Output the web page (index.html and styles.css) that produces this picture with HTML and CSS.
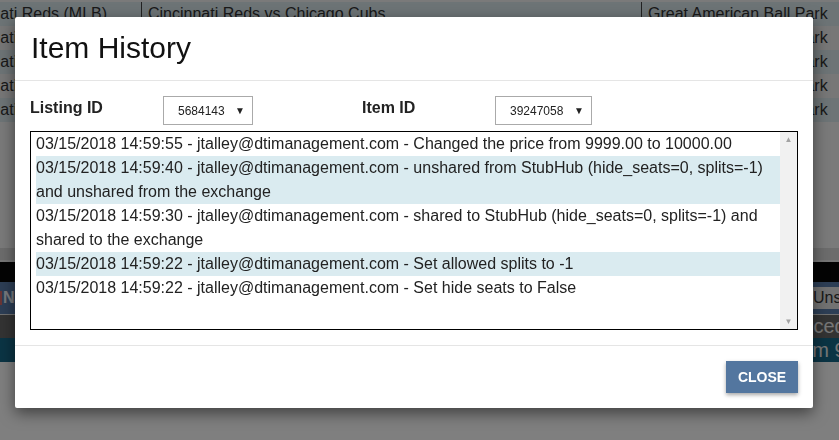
FILE: index.html
```html
<!DOCTYPE html>
<html lang="en">
  <head>
    <meta charset="UTF-8" />
    <meta name="viewport" content="width=device-width, initial-scale=1.0" />
    <title>Item History</title>
    <link rel="stylesheet" href="styles.css">
  </head>
  <body>
    <div class="page">
      <div class="grid">
        <div class="grid-row alt">
          <div class="cell c1">Cincinnati Reds (MLB)</div>
          <div class="cell c2">Cincinnati Reds vs Chicago Cubs</div>
          <div class="cell c3">Great American Ball Park</div>
        </div>
        <div class="grid-row">
          <div class="cell c1">Cincinnati Reds (MLB)</div>
          <div class="cell c2">Cincinnati Reds vs Chicago Cubs</div>
          <div class="cell c3">Great American Ball Park</div>
        </div>
        <div class="grid-row alt">
          <div class="cell c1">Cincinnati Reds (MLB)</div>
          <div class="cell c2">Cincinnati Reds vs Chicago Cubs</div>
          <div class="cell c3">Great American Ball Park</div>
        </div>
        <div class="grid-row">
          <div class="cell c1">Cincinnati Reds (MLB)</div>
          <div class="cell c2">Cincinnati Reds vs Chicago Cubs</div>
          <div class="cell c3">Great American Ball Park</div>
        </div>
        <div class="grid-row alt">
          <div class="cell c1">Cincinnati Reds (MLB)</div>
          <div class="cell c2">Cincinnati Reds vs Chicago Cubs</div>
          <div class="cell c3">Great American Ball Park</div>
        </div>
      </div>
      <div class="filler"></div>
      <div class="toolbar"></div>
      <div class="blackbar"></div>
      <div class="headbar">
        <span class="headcell"><span class="flag"></span>Name</span>
        <span class="pill">Unshare</span>
      </div>
      <div class="darkbar"><span class="tail">Priced</span></div>
      <div class="tealbar"><span class="tail">from 9999.00</span></div>
    </div>

    <div class="overlay"></div>

    <div class="modal">
      <div class="modal-header">
        <h2 class="modal-title">Item History</h2>
      </div>
      <div class="modal-body">
        <div class="id-row">
          <label class="id-label">Listing ID</label>
          <div class="dropdown first"><span>5684143</span><span class="caret">&#9660;</span></div>
          <label class="id-label">Item ID</label>
          <div class="dropdown second"><span>39247058</span><span class="caret">&#9660;</span></div>
        </div>
        <div class="history">
          <ul class="history-list">
            <li>03/15/2018 14:59:55 - jtalley@dtimanagement.com - Changed the price from 9999.00 to 10000.00</li>
            <li class="hl">03/15/2018 14:59:40 - jtalley@dtimanagement.com - unshared from StubHub (hide_seats=0, splits=-1) and unshared from the exchange</li>
            <li>03/15/2018 14:59:30 - jtalley@dtimanagement.com - shared to StubHub (hide_seats=0, splits=-1) and shared to the exchange</li>
            <li class="hl">03/15/2018 14:59:22 - jtalley@dtimanagement.com - Set allowed splits to -1</li>
            <li>03/15/2018 14:59:22 - jtalley@dtimanagement.com - Set hide seats to False</li>
          </ul>
          <div class="scrollbar">
            <span class="arrow">&#9650;</span>
            <span class="arrow">&#9660;</span>
          </div>
        </div>
      </div>
      <div class="modal-footer">
        <button class="btn-close" type="button">CLOSE</button>
      </div>
    </div>
  </body>
</html>
```
FILE: styles.css
```css
html,
body {
  margin: 0;
  height: 100%;
  overflow: hidden;
  font-family: "Liberation Sans", Arial, sans-serif;
}
.page {
  background: #fff;
  height: 100%;
  color: #333;
  font-size: 16px;
  overflow: hidden;
}
.grid {
  background: #f4f4f4;
  padding-top: 2px;
  margin-left: -59px;
  width: 898px;
}
.grid-row {
  display: flex;
  height: 24px;
  line-height: 24px;
  background: #eeeeee;
  white-space: nowrap;
}
.grid-row.alt {
  background: #dae8ec;
}
.cell {
  padding-left: 6px;
  overflow: hidden;
  box-sizing: border-box;
  flex-shrink: 0;
}
.c1 {
  width: 201px;
  border-right: 1px solid #444;
}
.c2 {
  width: 500px;
  border-right: 1px solid #444;
}
.c3 {
  flex-grow: 1;
  flex-shrink: 1;
  min-width: 0;
}
.filler {
  height: 126px;
  background: #f4f4f4;
}
.toolbar {
  height: 12px;
  background: #d8d8d8;
  border-bottom: 2px solid #ececec;
}
.blackbar {
  height: 20px;
  background: #080808;
}
.headbar {
  height: 32px;
  background: #5a7caa;
  border-bottom: 1px solid #e0e0e0;
  display: flex;
  align-items: center;
  white-space: nowrap;
  color: #f0f4fa;
  font-weight: bold;
}
.headcell {
  display: flex;
  align-items: center;
  gap: 1px;
  width: 810px;
  flex-shrink: 0;
}
.flag {
  width: 2px;
  height: 14px;
  background: #d46a6a;
}
.pill {
  background: #e4e4e4;
  color: #333;
  font-weight: normal;
  padding: 2px 4px 2px 2px;
  margin-left: 0;
  border-left: 1px solid #999;
  flex-shrink: 0;
}
.darkbar {
  height: 23px;
  line-height: 23px;
  background: #666;
  color: #eee;
  white-space: nowrap;
  font-size: 20px;
}
.tealbar {
  height: 24px;
  line-height: 24px;
  background: #166888;
  color: #eee;
  white-space: nowrap;
  font-size: 20px;
}
.tail {
  margin-left: 789px;
}
.overlay {
  position: fixed;
  inset: 0;
  background: rgba(0, 0, 0, 0.5);
}
.modal {
  position: absolute;
  left: 15px;
  top: 17px;
  width: 798px;
  background: #fff;
  border-radius: 2px;
  box-shadow: 0 5px 15px rgba(0, 0, 0, 0.5);
  color: #222;
}
.modal-header {
  padding: 15px 16px 16px;
  border-bottom: 1px solid #e5e5e5;
}
.modal-title {
  margin: 0;
  font-size: 30px;
  line-height: 32px;
  font-weight: normal;
  color: #111;
}
.modal-body {
  padding: 15px;
}
.id-row {
  display: flex;
  align-items: flex-start;
}
.id-label {
  width: 133px;
  padding-top: 1px;
  font-weight: bold;
  font-size: 16px;
  line-height: 22px;
}
.dropdown {
  height: 29px;
  box-sizing: border-box;
  border: 1px solid #aaa;
  display: flex;
  align-items: center;
  justify-content: space-between;
  padding: 0 7px 0 14px;
  font-size: 12px;
  color: #222;
}
.dropdown.first {
  width: 90px;
  margin-right: 109px;
}
.dropdown.second {
  width: 97px;
}
.caret {
  font-size: 10px;
}
.history {
  margin-top: 6px;
  height: 199px;
  box-sizing: border-box;
  border: 1px solid #000;
  display: flex;
}
.history-list {
  flex-grow: 1;
  min-width: 0;
  margin: 0;
  padding: 0 0 0 5px;
  list-style: none;
  font-size: 16px;
  line-height: 24px;
}
.history-list .hl {
  background: #daebf0;
}
.scrollbar {
  width: 17px;
  flex-shrink: 0;
  background: #f1f1f1;
  display: flex;
  flex-direction: column;
  justify-content: space-between;
  align-items: center;
  padding: 3px 0;
}
.arrow {
  font-size: 8px;
  color: #a3a3a3;
}
.modal-footer {
  padding: 15px;
  border-top: 1px solid #e5e5e5;
  display: flex;
  justify-content: flex-end;
}
.btn-close {
  width: 72px;
  height: 32px;
  border: none;
  background: #53769f;
  color: #fff;
  font-family: "Liberation Sans", Arial, sans-serif;
  font-weight: bold;
  font-size: 14px;
  box-shadow: 0 2px 4px rgba(0, 0, 0, 0.35);
}
```
